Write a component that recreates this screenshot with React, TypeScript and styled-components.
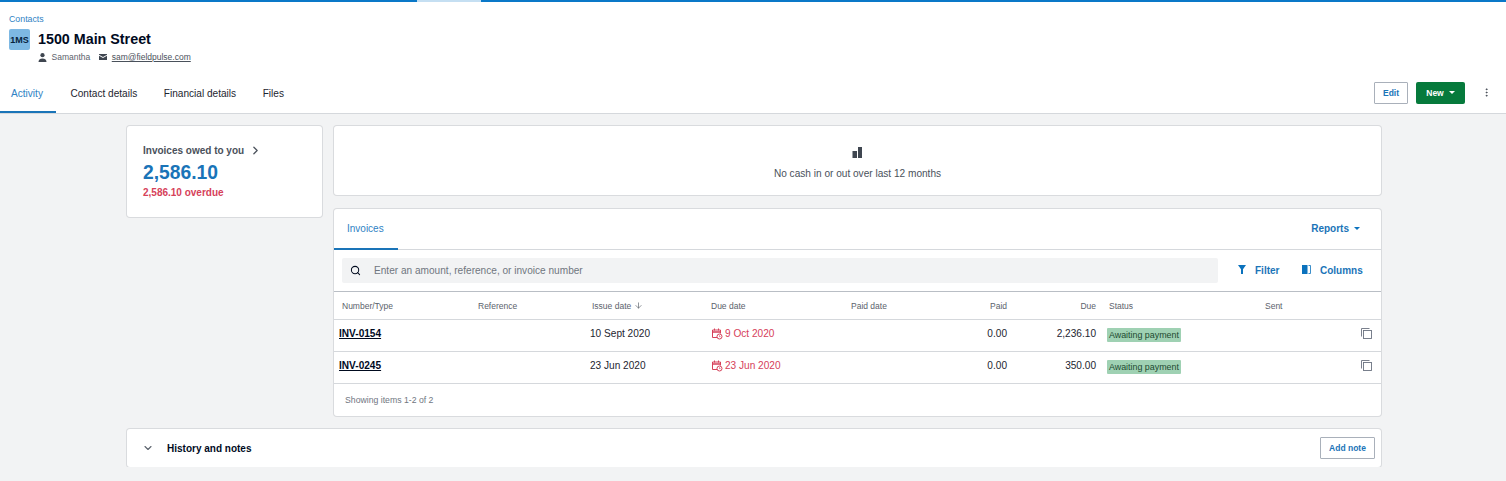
import { FC } from "react";
import styled, { createGlobalStyle } from "styled-components";
import { ChevronDown, ChevronRight, MoreVertical, Search, ArrowDown } from "lucide-react";

const GlobalStyle = createGlobalStyle`
  html, body {
    margin: 0;
    padding: 0;
    background: #f2f3f4;
    font-family: "Liberation Sans", Arial, sans-serif;
    color: #000a1e;
  }
`;

const invoices = [
  { number: "INV-0154", issued: "10 Sept 2020", due: "9 Oct 2020", paid: "0.00", owing: "2,236.10" },
  { number: "INV-0245", issued: "23 Jun 2020", due: "23 Jun 2020", paid: "0.00", owing: "350.00" },
];

const UserIcon: FC = () => (
  <svg width="9" height="9" viewBox="0 0 9 9" fill="#3f4650">
    <circle cx="4.5" cy="2.2" r="2.1" />
    <path d="M0.5 9c0-2.400 1.800-3.500 4-3.500s4 1.100 4 3.500z" />
  </svg>
);

const MailIcon: FC = () => (
  <svg width="8" height="6" viewBox="0 0 8 6" fill="#3f4650">
    <path d="M0 0h8v.8L4 3 0 .8z" />
    <path d="M0 1.800 4 4l4-2.200V6H0z" />
  </svg>
);

const BarsIcon: FC = () => (
  <svg width="11" height="11" viewBox="0 0 11 11" fill="#3f4650">
    <rect x="0.5" y="4" width="4.500" height="7" />
    <rect x="6" y="0" width="4" height="11" />
  </svg>
);

const FilterIcon: FC = () => (
  <svg width="8" height="9" viewBox="0 0 8 9" fill="#0b72bd">
    <path d="M0 0h8L5 4.200V9H3V4.200z" />
  </svg>
);

const ColumnsIcon: FC = () => (
  <svg width="9" height="9" viewBox="0 0 9 9">
    <rect x="0" y="0" width="5.500" height="9" fill="#0b72bd" />
    <path d="M6.500 .5h2v8h-2" fill="none" stroke="#0b72bd" strokeWidth=".8" />
  </svg>
);

const OverdueIcon: FC = () => (
  <svg width="12" height="12" viewBox="0 0 12 12" fill="none" stroke="#d6415a" strokeWidth="1">
    <path d="M6 9.500H1.500V2h8v3.500" />
    <path d="M1.500 4h8" strokeWidth="1.500" />
    <path d="M3.500.5v2M7.500.5v2" />
    <circle cx="8.500" cy="8.500" r="2.500" />
    <path d="M8.500 7.300v1.300h1" strokeWidth=".7" />
  </svg>
);

const CopyIcon: FC = () => (
  <svg width="11" height="11" viewBox="0 0 11 11" fill="none" stroke="#6b7280" strokeWidth="0.9">
    <path d="M.5 8.500V.5h8" />
    <rect x="2.500" y="2.500" width="8" height="8" />
  </svg>
);

const App: FC = () => (
  <>
    <GlobalStyle />
    <Progress>
      <ProgressBar />
      <ProgressGap />
      <ProgressBar />
    </Progress>
    <Header>
      <Crumb>Contacts</Crumb>
      <Identity>
        <Avatar>1MS</Avatar>
        <div>
          <Title>1500 Main Street</Title>
          <Meta>
            <MetaItem>
              <UserIcon />
              Samantha
            </MetaItem>
            <MetaItem>
              <MailIcon />
              <MailLink>sam@fieldpulse.com</MailLink>
            </MetaItem>
          </Meta>
        </div>
      </Identity>
      <NavRow>
        <Tab $active>Activity</Tab>
        <Tab>Contact details</Tab>
        <Tab>Financial details</Tab>
        <Tab>Files</Tab>
        <NavActions>
          <EditButton>Edit</EditButton>
          <NewButton>
            New <Caret $color="#fff" />
          </NewButton>
          <MoreVertical size={11} color="#3f4650" />
        </NavActions>
      </NavRow>
    </Header>
    <Main>
      <Columns>
        <OwedCard>
          <OwedLabel>
            Invoices owed to you <ChevronRight size={13} strokeWidth={2.4} />
          </OwedLabel>
          <OwedAmount>2,586.10</OwedAmount>
          <Overdue>2,586.10 overdue</Overdue>
        </OwedCard>
        <RightColumn>
          <CashCard>
            <BarsIcon />
            <CashText>No cash in or out over last 12 months</CashText>
          </CashCard>
          <InvoicesCard>
            <CardTabs>
              <InvoicesTab>Invoices</InvoicesTab>
              <Reports>
                Reports <Caret $color="#0b72bd" />
              </Reports>
            </CardTabs>
            <SearchRow>
              <SearchBox>
                <Search size={11} color="#000a1e" strokeWidth={2.2} />
                <SearchText>Enter an amount, reference, or invoice number</SearchText>
              </SearchBox>
              <ToolButton $width={44}>
                <FilterIcon /> Filter
              </ToolButton>
              <ToolButton $width={60}>
                <ColumnsIcon /> Columns
              </ToolButton>
            </SearchRow>
            <HeadRow>
              <HeadCell>Number/Type</HeadCell>
              <HeadCell>Reference</HeadCell>
              <HeadCell>
                Issue date <ArrowDown size={9} strokeWidth={1.8} />
              </HeadCell>
              <HeadCell>Due date</HeadCell>
              <HeadCell>Paid date</HeadCell>
              <HeadCell $right>Paid</HeadCell>
              <HeadCell $right>Due</HeadCell>
              <HeadCell>Status</HeadCell>
              <HeadCell>Sent</HeadCell>
            </HeadRow>
            {invoices.map((inv) => (
              <BodyRow key={inv.number}>
                <InvoiceLink>{inv.number}</InvoiceLink>
                <span />
                <IssueCell>{inv.issued}</IssueCell>
                <DueCell>
                  <OverdueIcon />
                  {inv.due}
                </DueCell>
                <span />
                <NumberCell>{inv.paid}</NumberCell>
                <NumberCell>{inv.owing}</NumberCell>
                <StatusCell>
                  <StatusPill>Awaiting payment</StatusPill>
                </StatusCell>
                <CopyCell>
                  <CopyIcon />
                </CopyCell>
              </BodyRow>
            ))}
            <TableFooter>Showing items 1-2 of 2</TableFooter>
          </InvoicesCard>
        </RightColumn>
      </Columns>
      <HistoryCard>
        <ChevronDown size={12} color="#5b626c" strokeWidth={2.2} />
        <HistoryTitle>History and notes</HistoryTitle>
        <AddNote>Add note</AddNote>
      </HistoryCard>
    </Main>
  </>
);

export default App;

const Progress = styled.div`
  display: flex;
  height: 2px;
`;

const ProgressBar = styled.div`
  flex: 1;
  background: #0a78c8;
  &:first-child {
    flex: 0 0 417px;
  }
`;

const ProgressGap = styled.div`
  flex: 0 0 64px;
  background: #c5dff2;
`;

const Header = styled.header`
  background: #fff;
  height: 112px;
  box-sizing: border-box;
  border-bottom: 1px solid #d5d8dc;
  padding-top: 12px;
  display: flex;
  flex-direction: column;
`;

const Crumb = styled.a`
  font-size: 8.8px;
  line-height: 10px;
  color: #2f82c4;
  padding-left: 9px;
`;

const Identity = styled.div`
  display: flex;
  gap: 8px;
  padding: 5px 0 0 9px;
`;

const Avatar = styled.div`
  width: 21px;
  height: 21px;
  border-radius: 2px;
  background: #7db8e3;
  color: #06233d;
  font-size: 9px;
  font-weight: 700;
  display: flex;
  align-items: center;
  justify-content: center;
`;

const Title = styled.h1`
  margin: 0;
  font-size: 14.3px;
  line-height: 20px;
  font-weight: 700;
  color: #000a1e;
`;

const Meta = styled.div`
  display: flex;
  align-items: center;
  gap: 9px;
  margin-top: 2px;
  height: 12px;
  font-size: 8.5px;
  color: #5b626c;
`;

const MetaItem = styled.span`
  display: flex;
  align-items: center;
  gap: 4.5px;
`;

const MailLink = styled.a`
  text-decoration: underline;
  color: #4a515b;
`;

const NavRow = styled.nav`
  display: flex;
  align-items: stretch;
  margin-top: auto;
  height: 41px;
  padding-right: 14px;
`;

const Tab = styled.a<{ $active?: boolean }>`
  display: flex;
  align-items: center;
  padding: 4px ${(p) => (p.$active ? "13.5px" : "12.5px")} 0 ${(p) => (p.$active ? "11px" : "14px")};
  font-size: 10.1px;
  color: ${(p) => (p.$active ? "#2f82c4" : "#1d2530")};
  border-bottom: 2px solid ${(p) => (p.$active ? "#1a74b8" : "transparent")};
`;

const NavActions = styled.div`
  margin-left: auto;
  display: flex;
  align-items: center;
  gap: 8px;

  svg:last-child {
    margin-left: 8px;
  }
`;

const EditButton = styled.button`
  width: 34px;
  height: 22px;
  box-sizing: border-box;
  padding: 0;
  background: #fff;
  border: 1px solid #a9b0ba;
  border-radius: 1px;
  color: #1a74b8;
  font: 700 8.5px "Liberation Sans", Arial, sans-serif;
`;

const NewButton = styled.button`
  width: 49px;
  height: 22px;
  padding: 0;
  background: #067a3c;
  border: none;
  border-radius: 2px;
  color: #fff;
  font: 700 8.5px "Liberation Sans", Arial, sans-serif;
  display: flex;
  align-items: center;
  justify-content: center;
  gap: 5px;
`;

const Caret = styled.span<{ $color: string }>`
  display: inline-block;
  width: 0;
  height: 0;
  border-left: 3.5px solid transparent;
  border-right: 3.5px solid transparent;
  border-top: 3.5px solid ${(p) => p.$color};
`;

const Main = styled.main`
  width: 1254px;
  margin: 12px 0 0 127px;
  display: flex;
  flex-direction: column;
  gap: 13px;
`;

const Columns = styled.div`
  display: flex;
  align-items: flex-start;
  gap: 12px;
`;

const Card = styled.section`
  background: #fff;
  border-radius: 3px;
  box-shadow: 0 0 0 1px rgba(0, 10, 30, 0.1);
`;

const OwedCard = styled(Card)`
  width: 195px;
  height: 91px;
  flex: none;
  box-sizing: border-box;
  padding: 18px 16px 0;
`;

const OwedLabel = styled.div`
  display: flex;
  align-items: center;
  gap: 5px;
  height: 12px;
  font-size: 10px;
  font-weight: 700;
  color: #4a515b;
`;

const OwedAmount = styled.div`
  margin-top: 5px;
  font-size: 19.3px;
  line-height: 24px;
  font-weight: 700;
  color: #1a74b8;
`;

const Overdue = styled.div`
  margin-top: 2px;
  font-size: 10px;
  line-height: 12px;
  font-weight: 700;
  color: #d6415a;
`;

const RightColumn = styled.div`
  flex: 1;
  min-width: 0;
  display: flex;
  flex-direction: column;
  gap: 14px;
`;

const CashCard = styled(Card)`
  height: 69px;
  display: flex;
  flex-direction: column;
  align-items: center;
  padding-top: 21px;
  box-sizing: border-box;
`;

const CashText = styled.div`
  margin-top: 10px;
  font-size: 10.1px;
  color: #4a515b;
`;

const InvoicesCard = styled(Card)`
  display: flex;
  flex-direction: column;
`;

const CardTabs = styled.div`
  display: flex;
  align-items: stretch;
  justify-content: space-between;
  height: 41px;
  box-sizing: border-box;
  border-bottom: 1px solid #d5d8dc;
`;

const InvoicesTab = styled.a`
  display: flex;
  align-items: center;
  padding: 0 14px 0 13px;
  font-size: 10px;
  color: #2f82c4;
  border-bottom: 2px solid #1a74b8;
  margin-bottom: -1px;
`;

const Reports = styled.a`
  display: flex;
  align-items: center;
  gap: 5px;
  padding-right: 21px;
  padding-bottom: 2px;
  font-size: 10px;
  font-weight: 700;
  color: #1a74b8;
`;

const SearchRow = styled.div`
  display: flex;
  align-items: center;
  height: 42px;
  padding: 0 8px;
  gap: 20px;
  border-bottom: 1px solid #b9bec5;
  box-sizing: border-box;
`;

const SearchBox = styled.div`
  flex: 0 0 876px;
  height: 25px;
  box-sizing: border-box;
  background: #f2f3f4;
  border-radius: 2px;
  display: flex;
  align-items: center;
  gap: 13px;
  padding-left: 8px;
`;

const SearchText = styled.span`
  font-size: 10.1px;
  color: #70767f;
`;

const ToolButton = styled.a<{ $width: number }>`
  flex: 0 0 ${(p) => p.$width}px;
  display: flex;
  align-items: center;
  gap: 9px;
  font-size: 10px;
  font-weight: 700;
  color: #1a74b8;

  svg {
    margin-bottom: 2px;
  }
`;

const tableColumns = "144px 114px 119px 140px 100px 56px 89px 169px 1fr";

const HeadRow = styled.div`
  display: grid;
  grid-template-columns: ${tableColumns};
  height: 28px;
  align-items: center;
  border-bottom: 1px solid #d5d8dc;
  box-sizing: border-box;
`;

const HeadCell = styled.div<{ $right?: boolean }>`
  display: flex;
  align-items: center;
  gap: 3px;
  font-size: 8.5px;
  color: #5b626c;
  justify-content: ${(p) => (p.$right ? "flex-end" : "flex-start")};
  &:first-child {
    padding-left: 8px;
  }
  &:nth-child(8) {
    padding-left: 13px;
  }
`;

const BodyRow = styled.div`
  display: grid;
  grid-template-columns: ${tableColumns};
  height: 32px;
  padding-bottom: 4px;
  align-items: center;
  border-bottom: 1px solid #d5d8dc;
  box-sizing: border-box;
  font-size: 10.1px;
  color: #1d2530;

  &:last-of-type {
    border-bottom-color: #b9bec5;
  }
`;

const InvoiceLink = styled.a`
  padding-left: 5px;
  font-size: 10.1px;
  font-weight: 700;
  color: #000a1e;
  text-decoration: underline;
`;

const IssueCell = styled.span`
  margin-left: -2px;
`;

const DueCell = styled.span`
  display: flex;
  align-items: center;
  gap: 2px;
  color: #d6415a;
`;

const NumberCell = styled.span`
  text-align: right;
`;

const StatusCell = styled.div`
  display: flex;
  padding: 2px 0 0 11px;
`;

const StatusPill = styled.span`
  height: 14px;
  line-height: 14px;
  padding: 0 2px;
  background: #9fd1b3;
  border-radius: 1px;
  font-size: 8.9px;
  color: #1d4a30;
`;

const CopyCell = styled.div`
  display: flex;
  justify-content: flex-end;
  padding-right: 9px;
`;

const TableFooter = styled.div`
  height: 32px;
  display: flex;
  align-items: center;
  padding: 0 0 1px 11px;
  box-sizing: border-box;
  font-size: 8.7px;
  color: #70767f;
`;

const HistoryCard = styled(Card)`
  height: 38px;
  display: flex;
  align-items: center;
  padding: 0 6px 0 15px;
  gap: 13px;
`;

const HistoryTitle = styled.h2`
  margin: 0;
  font-size: 10px;
  font-weight: 700;
  color: #000a1e;
`;

const AddNote = styled.button`
  margin-left: auto;
  width: 55px;
  height: 22px;
  box-sizing: border-box;
  padding: 0;
  background: #fff;
  border: 1px solid #a9b0ba;
  border-radius: 1px;
  color: #1a74b8;
  font: 700 8.5px "Liberation Sans", Arial, sans-serif;
`;
